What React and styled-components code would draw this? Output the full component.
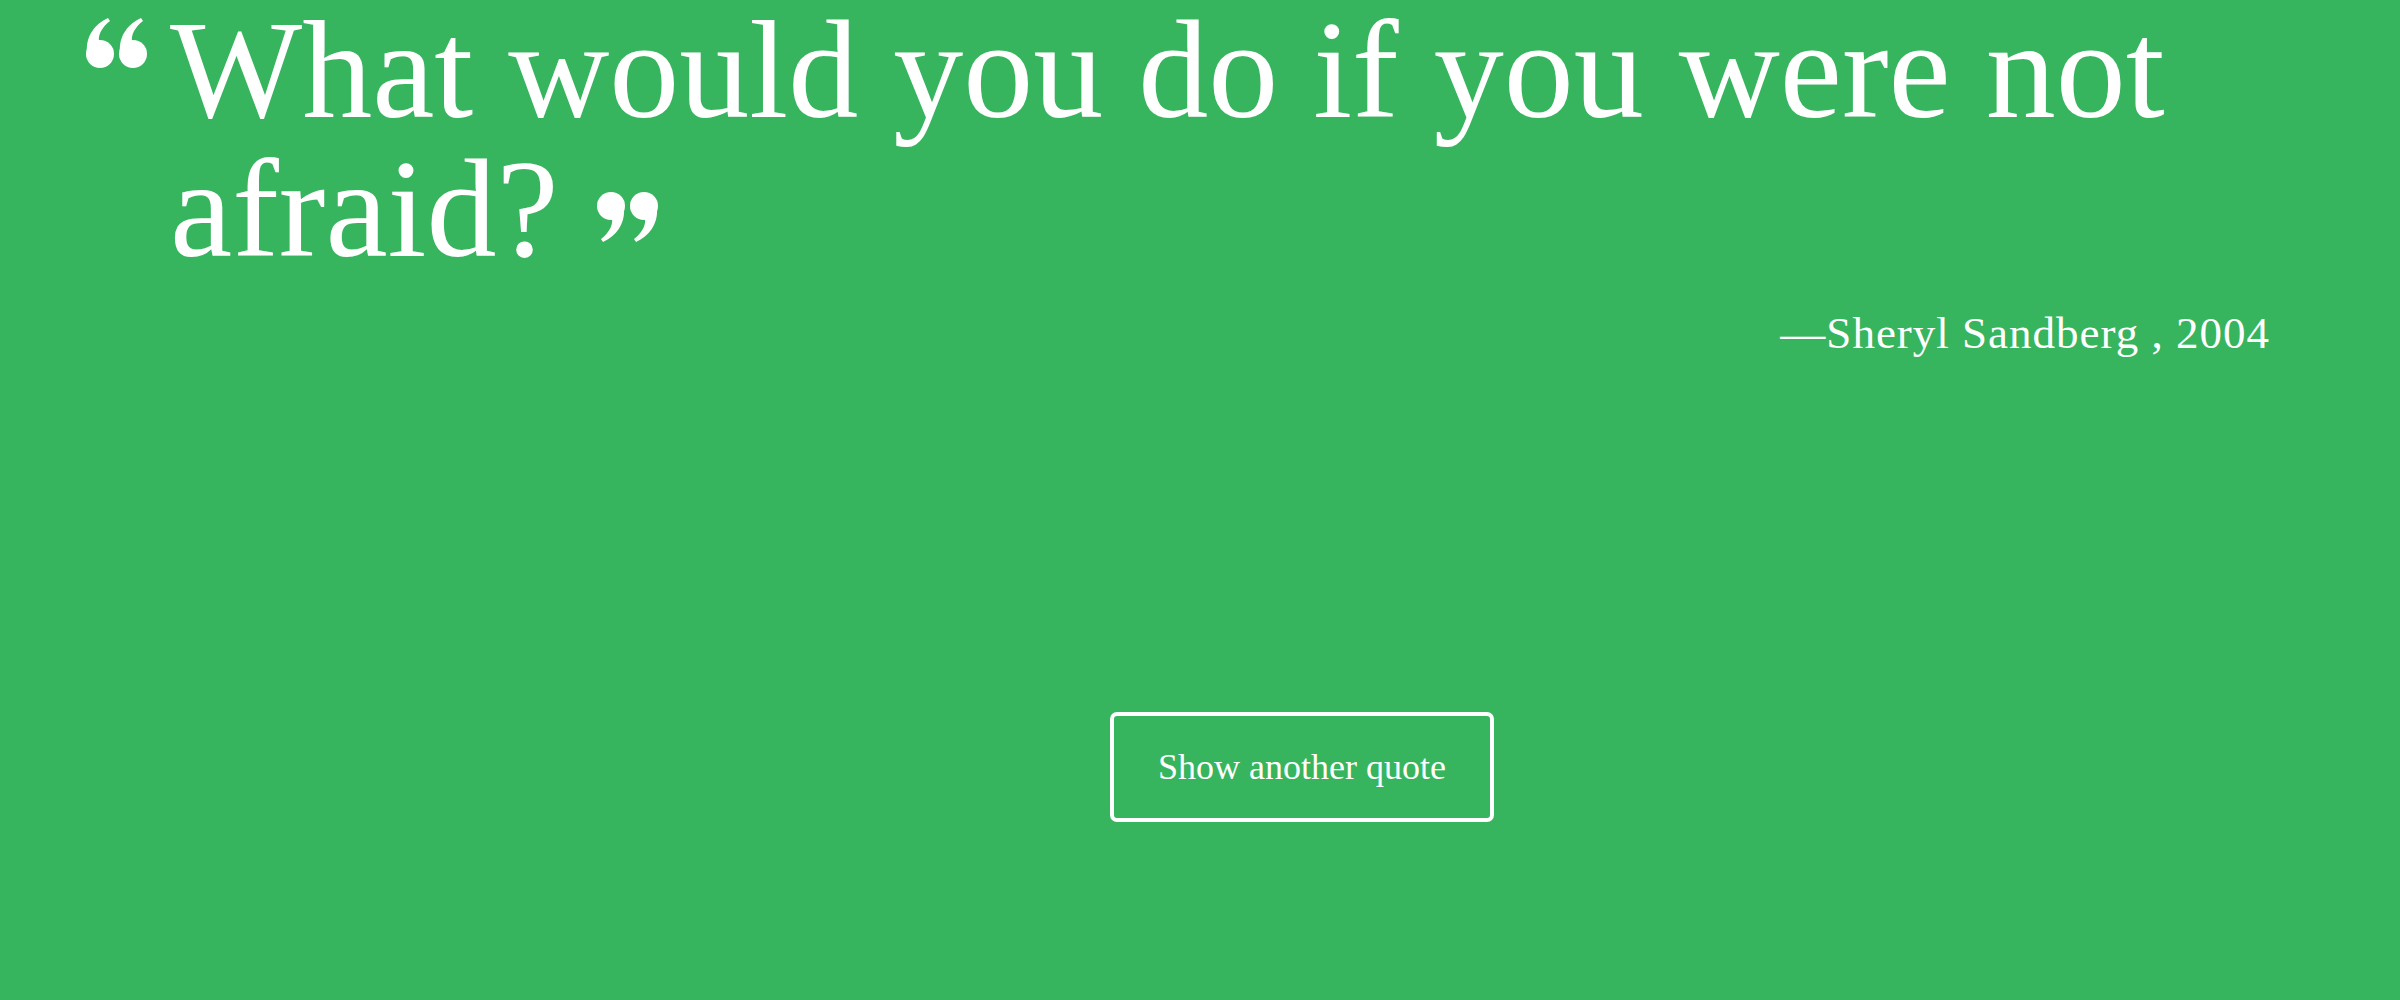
import styled, { createGlobalStyle } from 'styled-components'

const GlobalStyle = createGlobalStyle`
  html, body {
    margin: 0;
    padding: 0;
    background-color: #37b55e;
  }
  body {
    font-family: "Liberation Serif", "Times New Roman", serif;
    color: #fff;
  }
`

const Page = styled.main`
  min-height: 1000px;
  background-color: #37b55e;
  overflow: hidden;
`

const QuoteRow = styled.div`
  display: flex;
  align-items: flex-start;
  gap: 22px;
  padding: 0 130px 0 84px;
`

const OpenMark = styled.svg`
  flex-shrink: 0;
  margin-top: 18px;
`

const CloseMark = styled.svg`
  margin-left: 37px;
  vertical-align: 14px;
`

const QuoteText = styled.h1`
  margin: 0;
  font-size: 140px;
  font-weight: 400;
  line-height: 139px;
`

const Author = styled.p`
  margin: 29px 0 0;
  padding-right: 130px;
  text-align: right;
  font-size: 45px;
  line-height: 52px;
  letter-spacing: 1px;
`

const ButtonRow = styled.div`
  display: flex;
  justify-content: center;
  padding-left: 204px;
  margin-top: 353px;
`

const NewQuoteButton = styled.button`
  font-family: "Liberation Serif", "Times New Roman", serif;
  font-size: 36px;
  line-height: 40px;
  color: #fff;
  background: transparent;
  border: 4px solid #fff;
  border-radius: 7px;
  padding: 31px 44px;
  cursor: pointer;
`

const Mark = () => (
  <>
    <circle cx="15" cy="14" r="14" />
    <path d="M28 17 C29 32 20 44 7 50 L5 47 C13 41 17 33 16 27 Z" />
  </>
)

const QuoteMarks = ({ as: Svg, flip }) => (
  <Svg width="64" height="50" viewBox="0 0 64 50" fill="#fff">
    <g transform={flip ? 'rotate(180 32 25)' : undefined}>
      <Mark />
      <g transform="translate(33 0)">
        <Mark />
      </g>
    </g>
  </Svg>
)

export default function App() {
  return (
    <Page>
      <GlobalStyle />
      <QuoteRow>
        <QuoteMarks as={OpenMark} flip />
        <QuoteText>
          What would you do if you were not afraid?<QuoteMarks as={CloseMark} />
        </QuoteText>
      </QuoteRow>
      <Author>—Sheryl Sandberg , 2004</Author>
      <ButtonRow>
        <NewQuoteButton>Show another quote</NewQuoteButton>
      </ButtonRow>
    </Page>
  )
}
